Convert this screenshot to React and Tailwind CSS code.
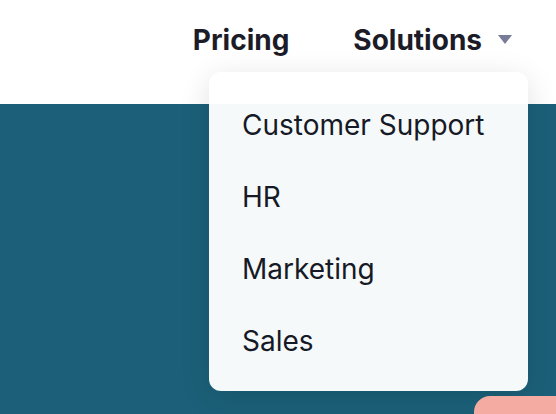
export default function App() {
  const items = ["Customer Support", "HR", "Marketing", "Sales"];
  return (
    <div className="relative w-[556px] h-[414px] overflow-hidden bg-[#1b6078] font-['Inter',sans-serif]">
      {/* Header */}
      <header className="h-[104px] bg-white flex items-start justify-end pt-[22px] pr-[44px]">
        <nav className="flex items-center gap-[64px] text-[28px] font-bold text-[#1c1c28]">
          <a className="leading-[36px]">Pricing</a>
          <button className="flex items-center gap-[16px] leading-[36px]">
            Solutions
            <svg width="14" height="10" viewBox="0 0 14 10">
              <path d="M0 0 H14 L7 9 Z" fill="#787c98" />
            </svg>
          </button>
        </nav>
      </header>

      {/* Dropdown */}
      <div className="absolute left-[209px] top-[72px] w-[319px] h-[319px] rounded-[12px] bg-white/[0.96] shadow-[0_6px_30px_rgba(0,0,0,0.12)] pt-[17px]">
        <ul className="flex flex-col">
          {items.map((item) => (
            <li key={item} className="px-[33px] h-[72px] flex items-center text-[28px] text-[#161a26] leading-none">
              {item}
            </li>
          ))}
        </ul>
      </div>

      {/* Pink card peeking in */}
      <div className="absolute left-[474px] top-[396px] w-[120px] h-[60px] rounded-tl-[16px] bg-[#f4aba2]" />
    </div>
  );
}
